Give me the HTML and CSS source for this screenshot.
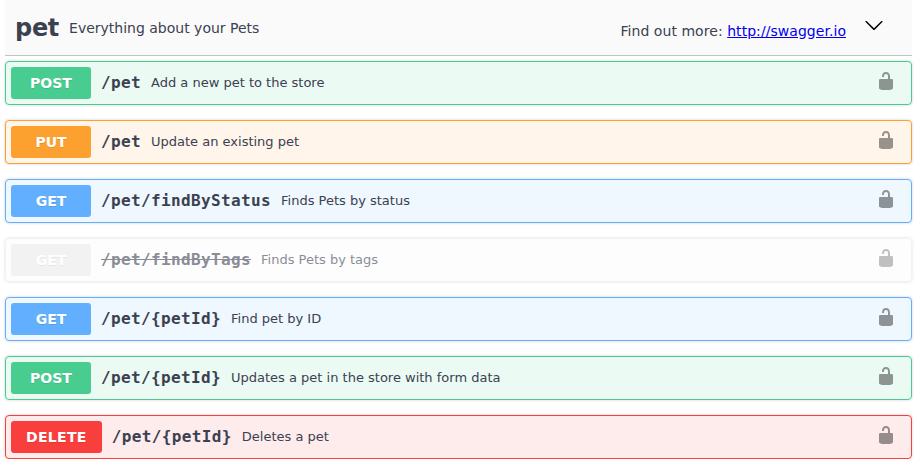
FILE: index.html
```html
<!DOCTYPE html>
<html lang="en">
<head>
<meta charset="utf-8">
<title>pet</title>
<link rel="stylesheet" href="styles.css">
</head>
<body>
<svg class="defs" width="0" height="0">
  <symbol id="unlocked" viewBox="0 0 20 20"><path d="M15.8 8H14V5.6C14 2.703 12.665 1 10 1 7.334 1 6 2.703 6 5.6V6h2v-.801C8 3.754 8.797 3 10 3c1.203 0 2 .754 2 2.199V8H4c-.553 0-1 .646-1 1.199V17c0 .549.428 1.139.951 1.307l1.197.387C5.672 18.861 6.55 19 7.1 19h5.8c.549 0 1.428-.139 1.951-.307l1.196-.387c.524-.167.953-.757.953-1.306V9.199C17 8.646 16.352 8 15.8 8z"/></symbol>
</svg>
<main class="section">
  <header class="tag">
    <h1 class="tag-name">pet</h1>
    <p class="tag-text">Everything about your Pets</p>
    <div class="tag-docs">Find out more: <a href="http://swagger.io">http://swagger.io</a></div>
    <svg class="arrow" viewBox="0 0 20 20"><path d="M17.418 6.109c.272-.268.709-.268.979 0s.271.701 0 .969l-7.908 7.83c-.27.268-.707.268-.979 0l-7.908-7.83c-.27-.268-.27-.701 0-.969.271-.268.709-.268.979 0L10 13.25l7.418-7.141z"/></svg>
  </header>
  <div class="operations">
    <div class="op post"><span class="method">POST</span><span class="path">/pet</span><span class="summary">Add a new pet to the store</span><svg class="lock"><use href="#unlocked"/></svg></div>
    <div class="op put"><span class="method">PUT</span><span class="path">/pet</span><span class="summary">Update an existing pet</span><svg class="lock"><use href="#unlocked"/></svg></div>
    <div class="op get"><span class="method">GET</span><span class="path">/pet/findByStatus</span><span class="summary">Finds Pets by status</span><svg class="lock"><use href="#unlocked"/></svg></div>
    <div class="op deprecated"><span class="method">GET</span><span class="path">/pet/findByTags</span><span class="summary">Finds Pets by tags</span><svg class="lock"><use href="#unlocked"/></svg></div>
    <div class="op get"><span class="method">GET</span><span class="path">/pet/{petId}</span><span class="summary">Find pet by ID</span><svg class="lock"><use href="#unlocked"/></svg></div>
    <div class="op post"><span class="method">POST</span><span class="path">/pet/{petId}</span><span class="summary">Updates a pet in the store with form data</span><svg class="lock"><use href="#unlocked"/></svg></div>
    <div class="op delete"><span class="method">DELETE</span><span class="path">/pet/{petId}</span><span class="summary">Deletes a pet</span><svg class="lock"><use href="#unlocked"/></svg></div>
  </div>
</main>
</body>
</html>
```
FILE: styles.css
```css
* { box-sizing: border-box; }

body {
  margin: 0;
  background: #fff;
  color: #3b4151;
  font-family: "DejaVu Sans", sans-serif;
}

.defs { display: none; }

.section { padding: 0 10px 0 5px; }

.tag {
  display: flex;
  align-items: center;
  height: 56px;
  padding: 0 28px 0 10px;
  background: #fafafa;
  border-bottom: 1px solid rgba(59, 65, 81, .3);
}

.tag-name { margin: 0; font-size: 24px; line-height: 28px; letter-spacing: -.3px; }

.tag-text {
  flex: 1;
  margin: 0;
  padding: 0 10px;
  font-size: 14px;
}

.tag-docs { padding-top: 6px; font-size: 14px; letter-spacing: .05px; }
.tag-docs a { color: #00e; }

.arrow { width: 20px; height: 20px; margin: 0 0 5px 18px; }

.operations {
  display: flex;
  flex-direction: column;
  gap: 15px;
  padding-top: 5px;
}

.op {
  display: flex;
  align-items: center;
  height: 44px;
  padding: 0 15px 0 5px;
  border: 1px solid var(--tone);
  border-radius: 4px;
  background: var(--fill);
  box-shadow: 0 0 3px rgba(0, 0, 0, .19);
}

.post { --tone: #49cc90; --fill: rgba(73, 204, 144, .1); }
.put { --tone: #fca130; --fill: rgba(252, 161, 48, .1); }
.get { --tone: #61affe; --fill: rgba(97, 175, 254, .1); }
.delete { --tone: #f93e3e; --fill: rgba(249, 62, 62, .1); }
.deprecated { --tone: #ebebeb; --fill: rgba(235, 235, 235, .1); opacity: .6; }

.method {
  min-width: 80px;
  height: 32px;
  padding: 0 15px;
  border-radius: 3px;
  background: var(--tone);
  color: #fff;
  font-size: 14px;
  font-weight: 700;
  line-height: 32px;
  text-align: center;
  text-shadow: 0 1px 0 rgba(0, 0, 0, .1);
}

.delete .method { letter-spacing: .33px; }

.path {
  padding: 0 10px 2px;
  font-family: "DejaVu Sans Mono", monospace;
  font-size: 16px;
  font-weight: 600;
  letter-spacing: .367px;
}

.deprecated .path { text-decoration: line-through; }

.summary { flex: 1; padding-bottom: 2px; font-size: 13px; }

.lock { width: 20px; height: 20px; margin-bottom: 4px; opacity: .4; }
```
